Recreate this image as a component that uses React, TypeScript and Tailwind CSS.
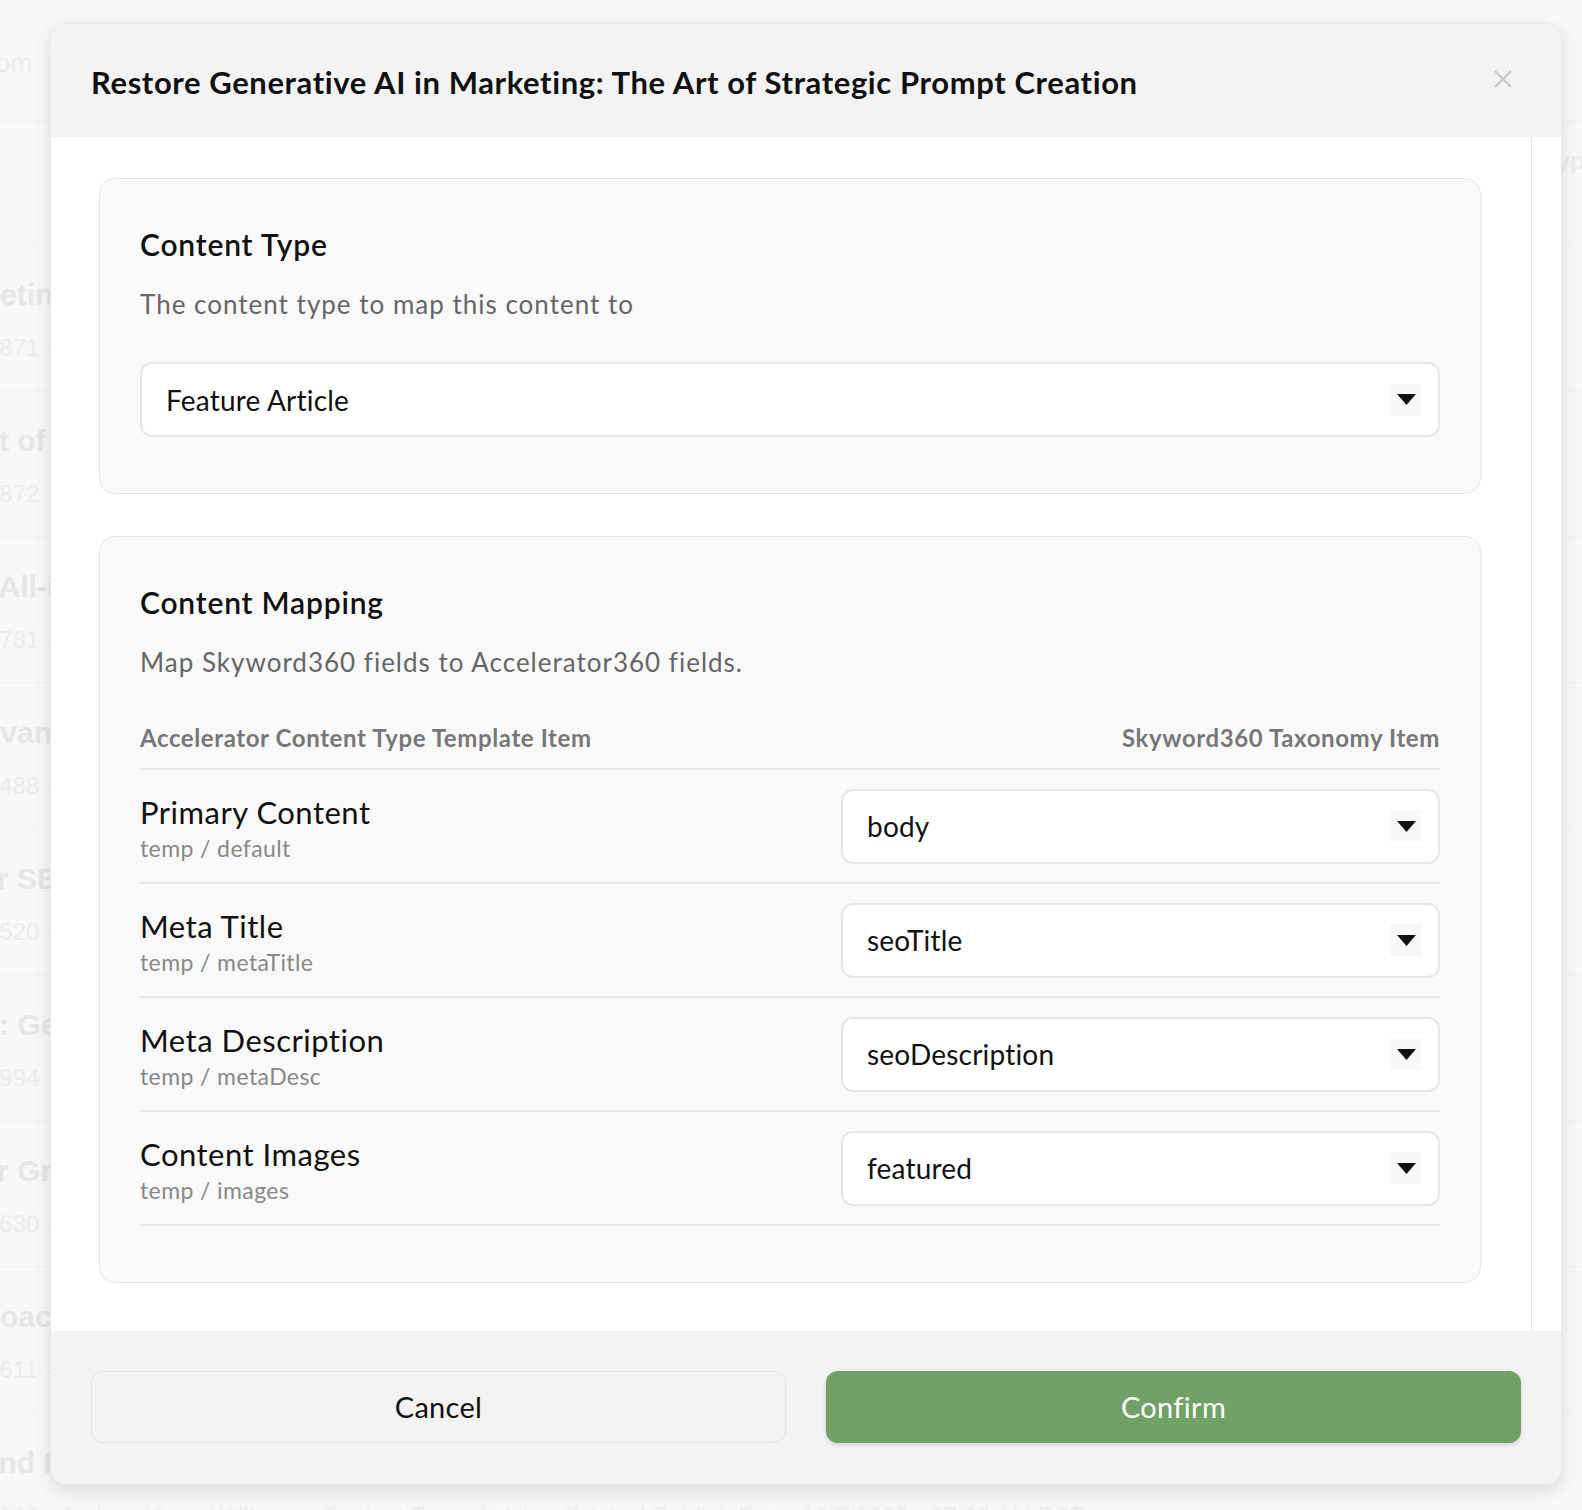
import React from 'react';

const FONT = 'font-["Lato","Liberation_Sans",sans-serif]';

interface BgRow {
  title: string;
  shift: string;
  meta: string;
}

const BG_ROWS: BgRow[] = [
  { title: 'Marketing Trends for the Year Ahead', shift: '-ml-[70px]', meta: '3871 · Staff Writer · Content Type: Article' },
  { title: 'The Art of Storytelling', shift: '-ml-[95px]', meta: '3872 · Staff Writer · Content Type: Article' },
  { title: 'The All-in-One Content Guide', shift: '-ml-[62px]', meta: '3781 · Staff Writer · Content Type: Article' },
  { title: 'Relevant Content Wins', shift: '-ml-[63px]', meta: '3488 · Staff Writer · Content Type: Article' },
  { title: 'Better SEO for Brands', shift: '-ml-[78px]', meta: '3520 · Staff Writer · Content Type: Article' },
  { title: 'Tips: Generative Writing', shift: '-ml-[62px]', meta: '3994 · Staff Writer · Content Type: Article' },
  { title: 'Fuel Your Growth', shift: '-ml-[127px]', meta: '3630 · Staff Writer · Content Type: Article' },
  { title: 'Approach to Planning', shift: '-ml-[70px]', meta: '3611 · Staff Writer · Content Type: Article' },
  { title: 'Trends and Research', shift: '-ml-[125px]', meta: '3010 · Andrea Mena Williams · Content Type: Article · Original Publish Date: 10/7/2023 · 07:08 AM PST' },
];

const MAPPINGS = [
  { label: 'Primary Content', path: 'temp / default', value: 'body' },
  { label: 'Meta Title', path: 'temp / metaTitle', value: 'seoTitle' },
  { label: 'Meta Description', path: 'temp / metaDesc', value: 'seoDescription' },
  { label: 'Content Images', path: 'temp / images', value: 'featured' },
];

const Background: React.FC = () => (
  <div className='absolute inset-0 font-["Liberation_Sans",sans-serif]'>
    <div className="h-[120px] pt-[44px] text-[26px] text-[#ececec]">
      <span className="-ml-[4px]">om</span>
    </div>
    <div className="h-[125px] border-y border-[#f2f2f2] flex items-start justify-end pt-[22px]">
      <span className="text-[24px] font-bold text-[#ececec] -mr-[16px]">Type</span>
    </div>
    {BG_ROWS.map((row) => (
      <div key={row.meta} className="h-[146px] border-b border-[#f2f2f2] pt-[32px] whitespace-nowrap">
        <div className={`text-[30px] leading-[36px] font-bold text-[#e6e6e6] ${row.shift}`}>{row.title}</div>
        <div className="mt-[20px] text-[24px] leading-[30px] text-[#ececec] -ml-[14px]">{row.meta}</div>
      </div>
    ))}
  </div>
);

const Caret: React.FC = () => (
  <span className="flex items-center justify-center w-8 h-8 bg-[#f8f8f8]" aria-hidden>
    <svg width="19" height="11" viewBox="0 0 19 11">
      <path d="M0 0 H19 L9.5 11 Z" fill="#111" />
    </svg>
  </span>
);

const Select: React.FC<{ value: string; className?: string }> = ({ value, className = '' }) => (
  <div
    className={`h-[75px] flex items-center justify-between pl-6 pr-4 bg-white border-2 border-[#e6e6e6] rounded-xl ${className}`}
  >
    <span className="text-[28px] tracking-[0.2px] text-[#111]">{value}</span>
    <Caret />
  </div>
);

export default function App() {
  return (
    <div className={`relative w-full h-[1510px] overflow-hidden bg-[#f8f8f8] ${FONT}`}>
      <Background />

      <div className="absolute left-[50px] top-[23px] w-[1512px] rounded-2xl overflow-hidden border border-[#e8e8e8] bg-white shadow-[0_6px_18px_rgba(0,0,0,0.12)]">
        {/* header */}
        <header className="h-[113px] bg-[#f3f3f3] flex items-center justify-between pl-10 pr-12">
          <h1 className="text-[31px] font-bold text-[#111] tracking-[0.6px] pt-[3px]">
            Restore Generative AI in Marketing: The Art of Strategic Prompt Creation
          </h1>
          <svg width="20" height="20" viewBox="0 0 20 20" className="-mt-1">
            <path d="M2 2 L18 18 M18 2 L2 18" stroke="#c4c4c4" strokeWidth="2" />
          </svg>
        </header>

        {/* body */}
        <div className="flex">
          <div className="flex-1 pl-12 pr-[50px] pt-[41px] pb-[48px] space-y-[42px]">
            <section className="bg-[#f9f9f9] border border-[#e6e6e6] rounded-2xl px-10 pt-[48px] pb-[56px]">
              <h2 className="text-[30px] leading-[34px] font-semibold tracking-[0.8px] text-[#111]">Content Type</h2>
              <p className="mt-[28px] text-[26px] leading-[30px] tracking-[1px] text-[#666]">
                The content type to map this content to
              </p>
              <Select value="Feature Article" className="mt-[43px]" />
            </section>

            <section className="bg-[#f9f9f9] border border-[#e6e6e6] rounded-2xl px-10 pt-[48px] pb-[56px]">
              <h2 className="text-[30px] leading-[34px] font-semibold tracking-[0.8px] text-[#111]">Content Mapping</h2>
              <p className="mt-[28px] text-[26px] leading-[30px] tracking-[1px] text-[#666]">
                Map Skyword360 fields to Accelerator360 fields.
              </p>
              <div className="mt-[47px] pb-[16px] flex justify-between border-b-2 border-[#e6e6e6] text-[24px] leading-[28px] font-bold tracking-[0.6px] text-[#777]">
                <span>Accelerator Content Type Template Item</span>
                <span>Skyword360 Taxonomy Item</span>
              </div>
              {MAPPINGS.map((m) => (
                <div key={m.label} className="h-[114px] flex items-center justify-between border-b-2 border-[#e6e6e6]">
                  <div className="pt-1">
                    <div className="text-[31px] leading-[34px] tracking-[0.5px] text-[#111]">{m.label}</div>
                    <div className="mt-[6px] text-[23px] leading-[26px] tracking-[0.4px] text-[#888]">{m.path}</div>
                  </div>
                  <Select value={m.value} className="w-[599px]" />
                </div>
              ))}
            </section>
          </div>
          <div className="w-[30px] border-l border-[#e4e4e4] bg-white" />
        </div>

        {/* footer */}
        <footer className="bg-[#f3f3f3] px-10 pt-10 pb-[41px] grid grid-cols-2 gap-10">
          <button className="h-[72px] rounded-xl bg-[#f3f3f3] border border-[#e3e3e3] text-[29px] tracking-[0.3px] text-[#111]">
            Cancel
          </button>
          <button className="h-[72px] rounded-xl bg-[#6fa264] text-[29px] tracking-[0.3px] text-white shadow-[0_2px_4px_rgba(0,0,0,0.15)]">
            Confirm
          </button>
        </footer>
      </div>
    </div>
  );
}
